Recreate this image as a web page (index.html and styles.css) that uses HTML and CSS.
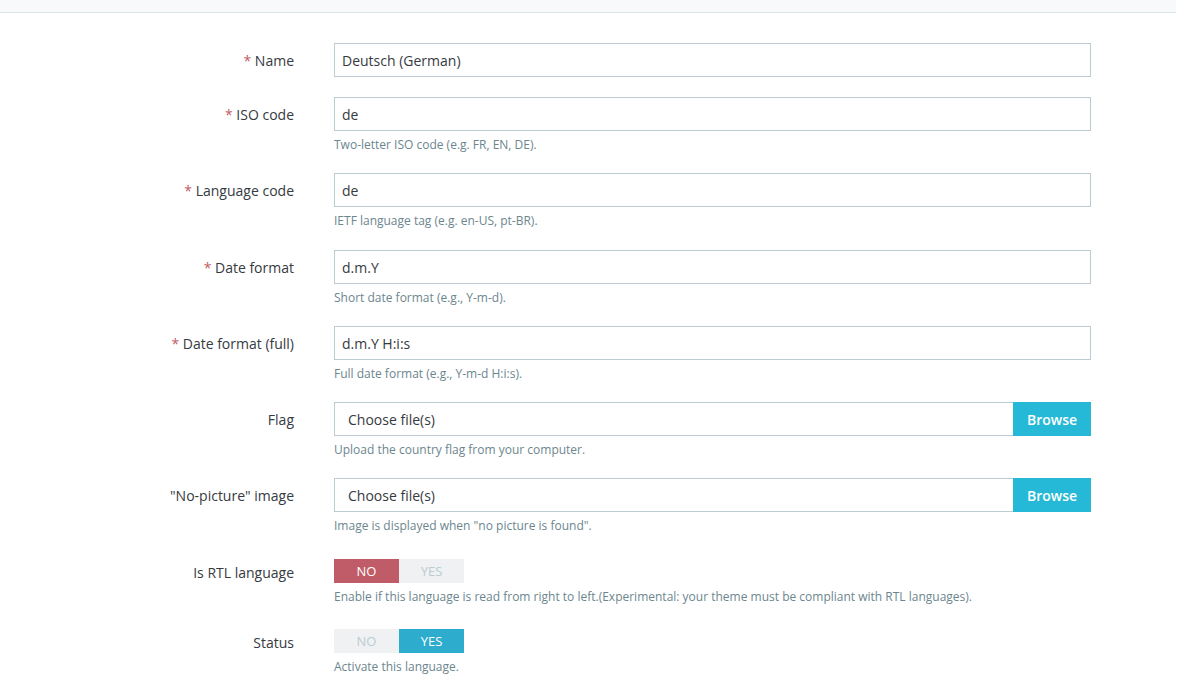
FILE: index.html
```html
<!DOCTYPE html>
<html>
<head>
  <title>Languages - Edit</title>
  <link rel="stylesheet" href="styles.css">
</head>
<body>
  <div class="page-head"></div>

  <form class="lang-form">
    <div class="form-row">
      <label class="form-label"><span class="req">*</span> Name</label>
      <div class="form-field">
        <input type="text" class="text-input" value="Deutsch (German)">
      </div>
    </div>

    <div class="form-row">
      <label class="form-label"><span class="req">*</span> ISO code</label>
      <div class="form-field">
        <input type="text" class="text-input" value="de">
        <p class="help">Two-letter ISO code (e.g. FR, EN, DE).</p>
      </div>
    </div>

    <div class="form-row">
      <label class="form-label"><span class="req">*</span> Language code</label>
      <div class="form-field">
        <input type="text" class="text-input" value="de">
        <p class="help">IETF language tag (e.g. en-US, pt-BR).</p>
      </div>
    </div>

    <div class="form-row">
      <label class="form-label"><span class="req">*</span> Date format</label>
      <div class="form-field">
        <input type="text" class="text-input" value="d.m.Y">
        <p class="help">Short date format (e.g., Y-m-d).</p>
      </div>
    </div>

    <div class="form-row">
      <label class="form-label"><span class="req">*</span> Date format (full)</label>
      <div class="form-field">
        <input type="text" class="text-input" value="d.m.Y H:i:s">
        <p class="help">Full date format (e.g., Y-m-d H:i:s).</p>
      </div>
    </div>

    <div class="form-row">
      <label class="form-label">Flag</label>
      <div class="form-field">
        <div class="file-input">
          <span class="file-name">Choose file(s)</span>
          <button type="button" class="browse-btn">Browse</button>
        </div>
        <p class="help">Upload the country flag from your computer.</p>
      </div>
    </div>

    <div class="form-row">
      <label class="form-label">"No-picture" image</label>
      <div class="form-field">
        <div class="file-input">
          <span class="file-name">Choose file(s)</span>
          <button type="button" class="browse-btn">Browse</button>
        </div>
        <p class="help">Image is displayed when "no picture is found".</p>
      </div>
    </div>

    <div class="form-row">
      <label class="form-label">Is RTL language</label>
      <div class="form-field">
        <div class="switch">
          <span class="switch-opt no-on">NO</span>
          <span class="switch-opt">YES</span>
        </div>
        <p class="help">Enable if this language is read from right to left.(Experimental: your theme must be compliant with RTL languages).</p>
      </div>
    </div>

    <div class="form-row">
      <label class="form-label">Status</label>
      <div class="form-field">
        <div class="switch">
          <span class="switch-opt">NO</span>
          <span class="switch-opt yes-on">YES</span>
        </div>
        <p class="help">Activate this language.</p>
      </div>
    </div>
  </form>
</body>
</html>
```

FILE: styles.css
```css
body {
  margin: 0;
  padding: 0;
  background-color: #ffffff;
  color: #363a41;
  font-family: "Open Sans", "Liberation Sans", sans-serif;
  font-size: 14px;
}

.page-head {
  height: 12px;
  background-color: #f8f9fb;
  border-bottom: 1px solid #dbe6e9;
  margin-right: 1px;
}

.lang-form {
  padding-top: 30px;
}

.form-row {
  display: flex;
  align-items: flex-start;
  margin-bottom: 20px;
}

.form-label {
  width: 294px;
  flex-shrink: 0;
  text-align: right;
  line-height: 32px;
  padding-top: 2px;
  color: #363a41;
}

.form-label .req {
  color: #c05c67;
}

.form-field {
  margin-left: 40px;
  width: 757px;
}

.text-input {
  display: block;
  box-sizing: border-box;
  width: 100%;
  height: 34px;
  margin: 0;
  padding: 1px 7px 0;
  border: 1px solid #bbcdd2;
  border-radius: 0;
  font-family: inherit;
  font-size: 14px;
  color: #363a41;
  outline: none;
}

.help {
  margin: 5px 0 0;
  font-size: 12px;
  line-height: 17.25px;
  color: #6c868e;
}

.file-input {
  display: flex;
  height: 34px;
}

.file-name {
  flex: 1;
  box-sizing: border-box;
  border: 1px solid #bbcdd2;
  border-right: none;
  padding: 1px 13px 0;
  line-height: 32px;
}

.browse-btn {
  width: 78px;
  height: 34px;
  border: none;
  margin: 0;
  padding: 0;
  background-color: #25b9d7;
  color: #ffffff;
  font-family: inherit;
  font-size: 14px;
  font-weight: 600;
}

.switch {
  display: flex;
  margin-top: 4px;
}

.switch-opt {
  width: 65px;
  height: 24px;
  line-height: 24px;
  text-align: center;
  font-size: 13px;
  background-color: #eff1f2;
  color: #bbcdd2;
}

.switch-opt.no-on {
  background-color: #c05c67;
  color: #ffffff;
}

.switch-opt.yes-on {
  background-color: #2eacce;
  color: #ffffff;
}
```
